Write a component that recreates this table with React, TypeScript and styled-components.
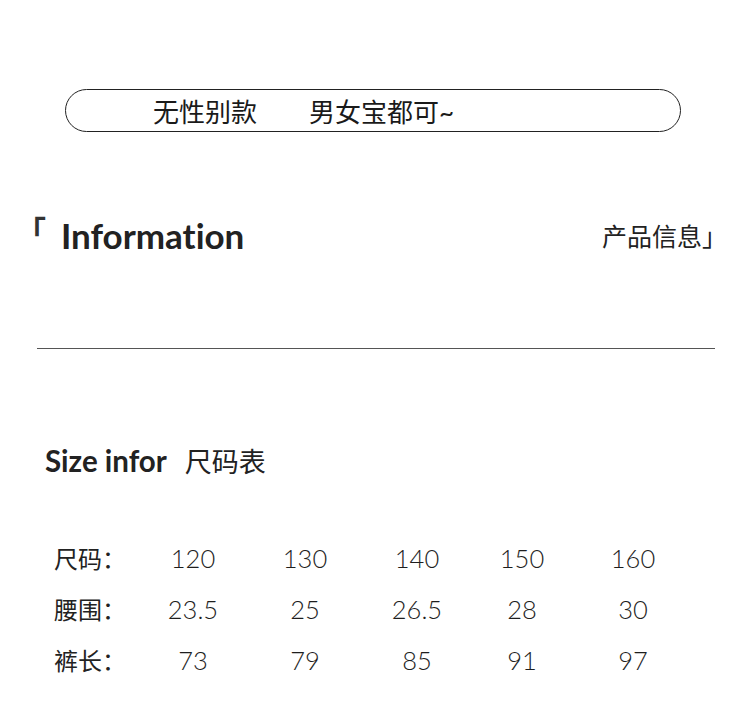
import React from 'react';
import styled, { createGlobalStyle } from 'styled-components';

const GlobalStyle = createGlobalStyle`
  html, body {
    margin: 0;
    padding: 0;
    background: #ffffff;
  }
  body {
    font-family: Lato, "Noto Sans CJK SC", sans-serif;
    color: #1e1e1e;
    font-variant-ligatures: none;
  }
`;

const cjk = `Lato, "Noto Sans CJK SC", sans-serif`;

const Page = styled.div`
  width: 750px;
  height: 722px;
  overflow: hidden;
  display: flex;
  flex-direction: column;
`;

const Pill = styled.div`
  margin: 89px 0 0 65px;
  width: 616px;
  height: 43px;
  box-sizing: border-box;
  border: 1.5px solid #222;
  border-radius: 22px;
  display: flex;
  align-items: center;
  padding-left: 87px;
  gap: 52px;
  font-family: ${cjk};
  font-size: 26px;
  font-weight: 400;
  color: #1a1a1a;
`;

const HeaderRow = styled.div`
  margin: 78px 35px 0 28px;
  height: 50px;
  display: flex;
  align-items: center;
  justify-content: space-between;
`;

const TitleGroup = styled.div`
  display: flex;
  align-items: center;
`;

const Corner = styled.span`
  font-family: ${cjk};
  font-size: 30px;
  font-weight: 700;
  color: #333;
  margin: -12px 0 0 -12px;
  width: 45px;
`;

const Title = styled.h1`
  margin: 0;
  font-family: Lato, sans-serif;
  font-weight: 700;
  font-size: 35px;
  color: #222;
  font-variant-ligatures: none;
`;

const SubTitle = styled.span`
  font-family: ${cjk};
  font-size: 25px;
  color: #222;
  margin-right: -12px;
`;

const Divider = styled.hr`
  margin: 88px 35px 0 37px;
  border: 0;
  height: 1px;
  background: #555;
`;

const SizeHeading = styled.div`
  margin: 91px 0 0 45px;
  height: 40px;
  display: flex;
  align-items: center;
  gap: 18px;
`;

const SizeEn = styled.span`
  font-family: Lato, sans-serif;
  font-weight: 700;
  font-size: 29.5px;
  color: #222;
`;

const SizeCn = styled.span`
  font-family: ${cjk};
  font-size: 27px;
  color: #222;
`;

const Table = styled.div`
  margin: 52px 0 0 54px;
  display: grid;
  grid-template-columns: 83px 112px 112px 112px 98px 124px;
  grid-auto-rows: 51px;
  align-items: center;
`;

const Label = styled.span`
  font-family: ${cjk};
  font-size: 24px;
  color: #222;
`;

const Cell = styled.span`
  text-align: center;
  font-family: Lato, sans-serif;
  font-weight: 300;
  font-size: 25.5px;
  color: #1e1e1e;
`;

const rows = [
  { label: '尺码：', values: ['120', '130', '140', '150', '160'] },
  { label: '腰围：', values: ['23.5', '25', '26.5', '28', '30'] },
  { label: '裤长：', values: ['73', '79', '85', '91', '97'] },
];

export default function App() {
  return (
    <Page>
      <GlobalStyle />
      <Pill>
        <span>无性别款</span>
        <span>男女宝都可~</span>
      </Pill>
      <HeaderRow>
        <TitleGroup>
          <Corner>「</Corner>
          <Title>Information</Title>
        </TitleGroup>
        <SubTitle>产品信息」</SubTitle>
      </HeaderRow>
      <Divider />
      <SizeHeading>
        <SizeEn>Size infor</SizeEn>
        <SizeCn>尺码表</SizeCn>
      </SizeHeading>
      <Table>
        {rows.map((row) => (
          <React.Fragment key={row.label}>
            <Label>{row.label}</Label>
            {row.values.map((v, i) => (
              <Cell key={i}>{v}</Cell>
            ))}
          </React.Fragment>
        ))}
      </Table>
    </Page>
  );
}
